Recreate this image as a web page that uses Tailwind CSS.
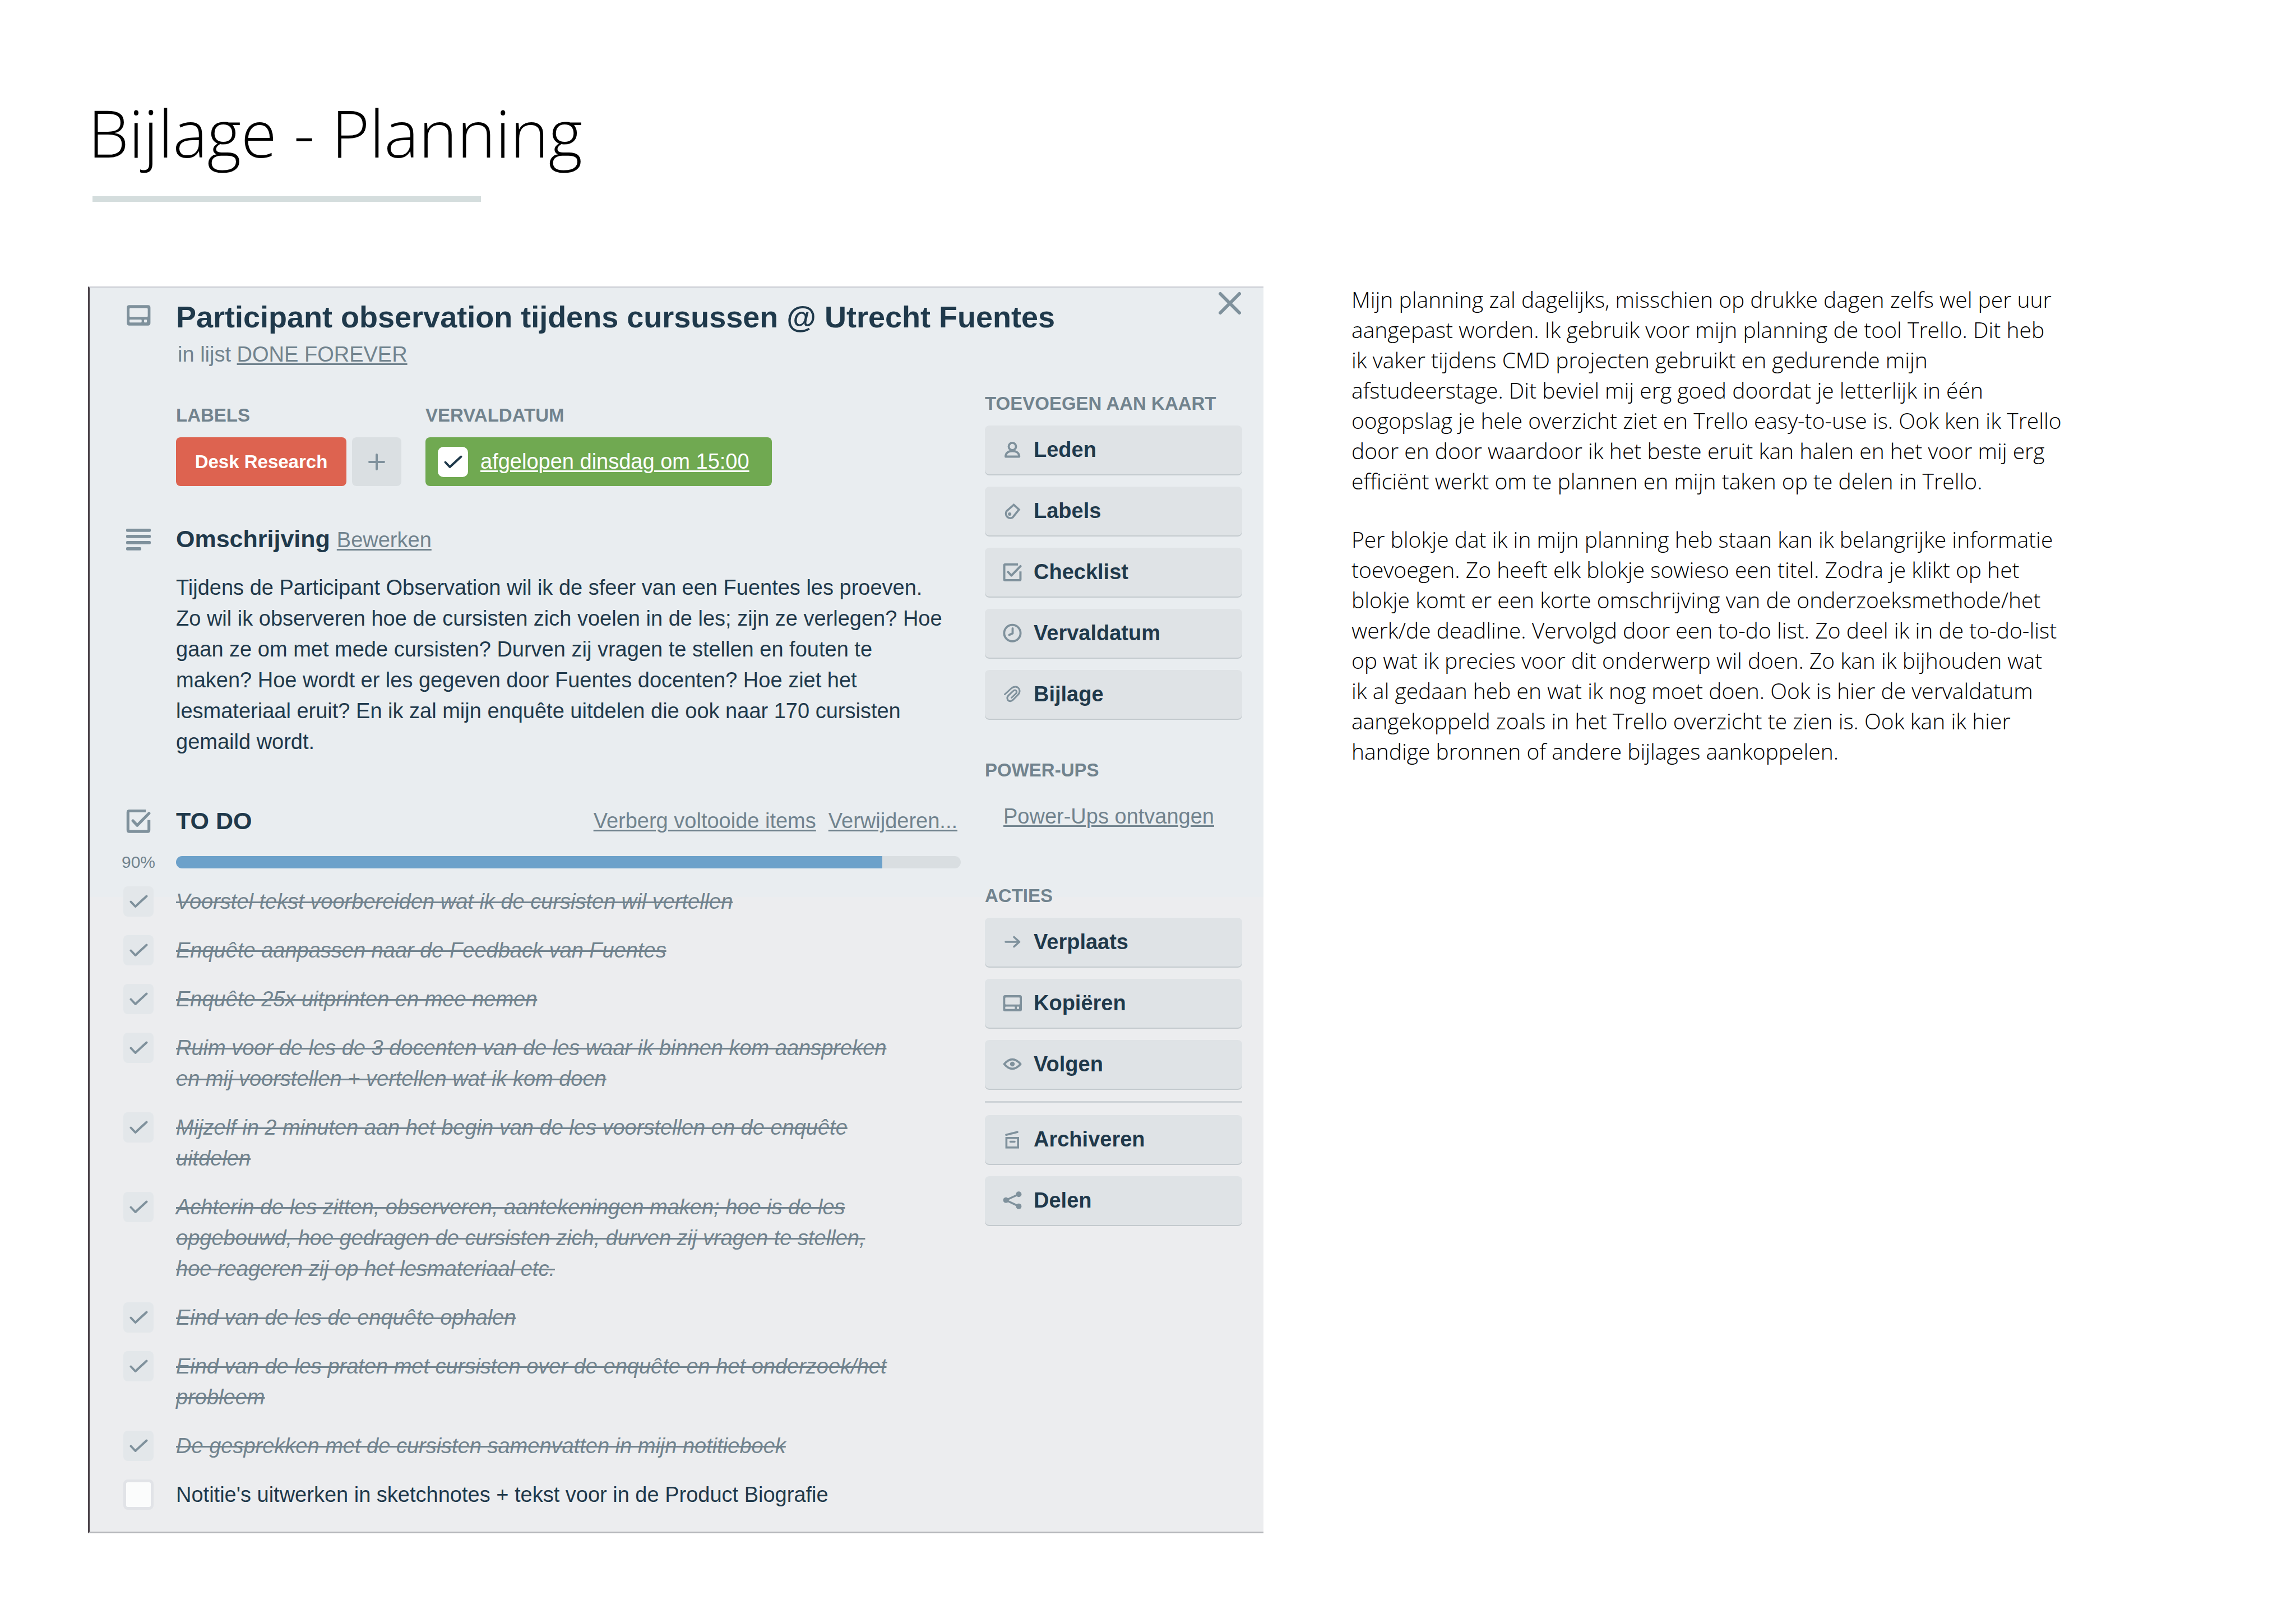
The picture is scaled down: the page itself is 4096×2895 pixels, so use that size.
<!DOCTYPE html>
<html lang="nl">
<head>
<meta charset="utf-8">
<meta name="viewport" content="width=device-width, initial-scale=1">
<title>Bijlage - Planning</title>
<script src="https://cdn.jsdelivr.net/npm/@tailwindcss/browser@4"></script>
</head>
<body class="min-h-screen bg-white px-[157px] pt-[156px] pb-[157px] text-black">

<svg class="hidden" aria-hidden="true">
  <symbol id="card" viewBox="5 6 34 31"><path fill="currentColor" fill-rule="evenodd" d="M9 7H35.5Q39 7 39 10.500V32.500Q39 36 35.500 36H9Q5.500 36 5.500 32.500V10.500Q5.500 7 9 7ZM10.500 11.200Q9.300 11.200 9.300 12.500V22.500Q9.300 23.700 10.500 23.700H34Q35.200 23.700 35.200 22.500V12.500Q35.200 11.200 34 11.200ZM10.300 27.500Q9.300 27.500 9.300 28.500V30.700Q9.300 31.700 10.300 31.700H25.500Q26.500 31.700 26.500 30.700V28.500Q26.500 27.500 25.500 27.500ZM31 27.500Q30 27.500 30 28.500V30.700Q30 31.700 31 31.700H33Q34 31.700 34 30.700V28.500Q34 27.500 33 27.500Z"/></symbol>
  <symbol id="checklist" viewBox="5 4 34.500 34.500"><g fill="none" stroke="currentColor" stroke-width="4"><path d="M32.500 6.700H9.500Q7.600 6.700 7.600 8.600V33.600Q7.600 35.500 9.500 35.500H35Q36.900 35.500 36.900 33.600V19.500"/><path stroke-linecap="round" stroke-linejoin="round" d="M14.500 20.500L20.500 27L37 10"/></g></symbol>
  <symbol id="check" viewBox="0 0 54 54"><path fill="none" stroke="currentColor" stroke-width="4" stroke-linecap="round" stroke-linejoin="round" d="M13.500 27.500L21.500 36L41.500 17.500"/></symbol>
</svg>

<header>
  <h1 class="font-['Open_Sans',sans-serif] text-[116px] leading-[160px] font-light">Bijlage - Planning</h1>
  <div class="mt-[34px] ml-2 h-[10px] w-[693px] bg-[#d4dddd]"></div>
</header>

<main class="mt-[151px] grid grid-cols-[2097fr_1528fr] items-start gap-[157px]">

  <article class="border-t-2 border-b-3 border-l-3 border-t-[#c9cbd2] border-b-[#b5b7bb] border-l-[#4a4349] bg-[linear-gradient(to_bottom,#e9edf0_49%,#ecedef_49%)] pt-[6px] pr-[38px] pb-[38px] pl-[56px] font-['Liberation_Sans',Arial,sans-serif] text-[38px] leading-[55px] text-[#1f394b]">

    <header class="flex items-start gap-9">
      <div class="mt-[14px] flex h-[58px] w-[62px] shrink-0 items-center justify-center text-[#7f919c]">
        <svg class="h-[39px] w-[44px]"><use href="#card"/></svg>
      </div>
      <div class="mt-[14px] flex-1">
        <h2 class="text-[54px] leading-[64px] font-bold">Participant observation tijdens cursussen @ Utrecht Fuentes</h2>
        <p class="mt-2 pl-[3px] text-[#71838e]">in lijst <a href="#" class="underline decoration-[3px] underline-offset-[3px]">DONE FOREVER</a></p>
      </div>
      <button type="button" aria-label="Sluiten" class="size-[44px] shrink-0 text-[#7f919c]">
        <svg class="size-[44px]" viewBox="0 0 44 44"><path fill="none" stroke="currentColor" stroke-width="6" stroke-linecap="round" d="M5 5L39 39M39 5L5 39"/></svg>
      </button>
    </header>

    <div class="mt-10 flex items-start gap-[43px]">

      <div class="min-w-0 flex-1 pt-[21px]">
        <div class="flex gap-[43px] pl-[98px]">
          <section>
            <h3 class="text-[33px] leading-10 font-bold text-[#71838e]">LABELS</h3>
            <div class="mt-[19px] flex gap-[10px]">
              <button type="button" class="h-[87px] w-[304px] rounded-[8px] bg-[#dd6350] text-[33px] leading-10 font-bold text-white">Desk Research</button>
              <button type="button" aria-label="Label toevoegen" class="flex h-[87px] w-[88px] items-center justify-center rounded-[8px] bg-[#dadfe2] text-[#7f919c]">
                <svg class="size-[32px]" viewBox="0 0 32 32"><path fill="none" stroke="currentColor" stroke-width="4" stroke-linecap="round" d="M16 3V29M3 16H29"/></svg>
              </button>
            </div>
          </section>
          <section>
            <h3 class="text-[33px] leading-10 font-bold text-[#71838e]">VERVALDATUM</h3>
            <div class="mt-[19px] flex h-[87px] w-[618px] items-center gap-[22px] rounded-[8px] bg-[#70a951] pl-[22px]">
              <span class="grid">
                <input type="checkbox" checked aria-label="Vervaldatum voltooid" class="size-[54px] appearance-none rounded-[10px] bg-white [grid-area:1/1]">
                <svg class="pointer-events-none size-[54px] [grid-area:1/1]"><use href="#check"/></svg>
              </span>
              <a href="#" class="text-white underline decoration-[3px] underline-offset-[3px]">afgelopen dinsdag om 15:00</a>
            </div>
          </section>
        </div>

        <section class="mt-[67px]">
          <div class="flex gap-9">
            <div class="flex w-[62px] shrink-0 items-center justify-center text-[#7f919c]">
              <svg class="h-[39px] w-[44px]" viewBox="0 0 44 39" fill="currentColor"><rect width="44" height="5.800" rx="2"/><rect y="11" width="44" height="5.800" rx="2"/><rect y="22" width="44" height="5.800" rx="2"/><rect y="33" width="27" height="5.800" rx="2"/></svg>
            </div>
            <div class="flex items-baseline gap-3">
              <h3 class="text-[43px] leading-[55px] font-bold">Omschrijving</h3>
              <a href="#" class="text-[#71838e] underline decoration-[3px] underline-offset-[3px]">Bewerken</a>
            </div>
          </div>
          <p class="mt-[30px] pl-[98px]">Tijdens de Participant Observation wil ik de sfeer van een Fuentes les proeven.<br>Zo wil ik observeren hoe de cursisten zich voelen in de les; zijn ze verlegen? Hoe<br>gaan ze om met mede cursisten? Durven zij vragen te stellen en fouten te<br>maken? Hoe wordt er les gegeven door Fuentes docenten? Hoe ziet het<br>lesmateriaal eruit? En ik zal mijn enquête uitdelen die ook naar 170 cursisten<br>gemaild wordt.</p>
        </section>

        <section class="mt-[86px]">
          <div class="flex gap-9">
            <div class="flex w-[62px] shrink-0 items-center justify-center text-[#7f919c]">
              <svg class="size-[44px]"><use href="#checklist"/></svg>
            </div>
            <h3 class="flex-1 text-[43px] leading-[55px] font-bold">TO DO</h3>
            <div class="flex gap-[22px] pr-[6px] text-[#71838e]">
              <a href="#" class="underline decoration-[3px] underline-offset-[3px]">Verberg voltooide items</a>
              <a href="#" class="underline decoration-[3px] underline-offset-[3px]">Verwijderen...</a>
            </div>
          </div>

          <div class="mt-[26px] flex items-center gap-9">
            <span class="w-[62px] shrink-0 text-center text-[30px] leading-10 text-[#71838e]">90%</span>
            <div class="h-[22px] flex-1 overflow-hidden rounded-full bg-[#d9dee1]" role="progressbar" aria-valuenow="90" aria-valuemin="0" aria-valuemax="100" aria-label="TO DO">
              <div class="h-full bg-[#6ca1ca]" style="width:90%"></div>
            </div>
          </div>

          <ul class="mt-[23px] flex flex-col gap-8 text-[#71838e] italic">
            <li><label class="flex gap-10 pl-1"><span class="grid h-[55px]"><input type="checkbox" checked class="size-[54px] appearance-none rounded-[8px] bg-[#e3e7ea] [grid-area:1/1]"><svg class="pointer-events-none size-[54px] text-[#7f919c] [grid-area:1/1]"><use href="#check"/></svg></span><span class="line-through decoration-[3px]">Voorstel tekst voorbereiden wat ik de cursisten wil vertellen</span></label></li>
            <li><label class="flex gap-10 pl-1"><span class="grid h-[55px]"><input type="checkbox" checked class="size-[54px] appearance-none rounded-[8px] bg-[#e3e7ea] [grid-area:1/1]"><svg class="pointer-events-none size-[54px] text-[#7f919c] [grid-area:1/1]"><use href="#check"/></svg></span><span class="line-through decoration-[3px]">Enquête aanpassen naar de Feedback van Fuentes</span></label></li>
            <li><label class="flex gap-10 pl-1"><span class="grid h-[55px]"><input type="checkbox" checked class="size-[54px] appearance-none rounded-[8px] bg-[#e3e7ea] [grid-area:1/1]"><svg class="pointer-events-none size-[54px] text-[#7f919c] [grid-area:1/1]"><use href="#check"/></svg></span><span class="line-through decoration-[3px]">Enquête 25x uitprinten en mee nemen</span></label></li>
            <li><label class="flex gap-10 pl-1"><span class="grid h-[55px]"><input type="checkbox" checked class="size-[54px] appearance-none rounded-[8px] bg-[#e3e7ea] [grid-area:1/1]"><svg class="pointer-events-none size-[54px] text-[#7f919c] [grid-area:1/1]"><use href="#check"/></svg></span><span class="line-through decoration-[3px]">Ruim voor de les de 3 docenten van de les waar ik binnen kom aanspreken<br>en mij voorstellen + vertellen wat ik kom doen</span></label></li>
            <li><label class="flex gap-10 pl-1"><span class="grid h-[55px]"><input type="checkbox" checked class="size-[54px] appearance-none rounded-[8px] bg-[#e3e7ea] [grid-area:1/1]"><svg class="pointer-events-none size-[54px] text-[#7f919c] [grid-area:1/1]"><use href="#check"/></svg></span><span class="line-through decoration-[3px]">Mijzelf in 2 minuten aan het begin van de les voorstellen en de enquête<br>uitdelen</span></label></li>
            <li><label class="flex gap-10 pl-1"><span class="grid h-[55px]"><input type="checkbox" checked class="size-[54px] appearance-none rounded-[8px] bg-[#e3e7ea] [grid-area:1/1]"><svg class="pointer-events-none size-[54px] text-[#7f919c] [grid-area:1/1]"><use href="#check"/></svg></span><span class="line-through decoration-[3px]">Achterin de les zitten, observeren, aantekeningen maken; hoe is de les<br>opgebouwd, hoe gedragen de cursisten zich, durven zij vragen te stellen,<br>hoe reageren zij op het lesmateriaal etc.</span></label></li>
            <li><label class="flex gap-10 pl-1"><span class="grid h-[55px]"><input type="checkbox" checked class="size-[54px] appearance-none rounded-[8px] bg-[#e3e7ea] [grid-area:1/1]"><svg class="pointer-events-none size-[54px] text-[#7f919c] [grid-area:1/1]"><use href="#check"/></svg></span><span class="line-through decoration-[3px]">Eind van de les de enquête ophalen</span></label></li>
            <li><label class="flex gap-10 pl-1"><span class="grid h-[55px]"><input type="checkbox" checked class="size-[54px] appearance-none rounded-[8px] bg-[#e3e7ea] [grid-area:1/1]"><svg class="pointer-events-none size-[54px] text-[#7f919c] [grid-area:1/1]"><use href="#check"/></svg></span><span class="line-through decoration-[3px]">Eind van de les praten met cursisten over de enquête en het onderzoek/het<br>probleem</span></label></li>
            <li><label class="flex gap-10 pl-1"><span class="grid h-[55px]"><input type="checkbox" checked class="size-[54px] appearance-none rounded-[8px] bg-[#e3e7ea] [grid-area:1/1]"><svg class="pointer-events-none size-[54px] text-[#7f919c] [grid-area:1/1]"><use href="#check"/></svg></span><span class="line-through decoration-[3px]">De gesprekken met de cursisten samenvatten in mijn notitieboek</span></label></li>
            <li><label class="flex gap-10 pl-1 text-[#1f394b] not-italic"><input type="checkbox" class="size-[54px] appearance-none rounded-[8px] border-5 border-[#e1e3e7] bg-[#fbfcfc]"><span>Notitie's uitwerken in sketchnotes + tekst voor in de Product Biografie</span></label></li>
          </ul>
        </section>
      </div>

      <aside class="w-[459px] shrink-0">
        <h3 class="text-[33px] leading-10 font-bold text-[#71838e]">TOEVOEGEN AAN KAART</h3>
        <div class="mt-[19px] flex flex-col gap-[22px]">
          <button type="button" class="flex h-[87px] items-center gap-4 rounded-[8px] bg-[#dfe3e6] pl-[27px] font-bold shadow-[0_2px_0_#c3cace]"><svg class="size-[44px] text-[#7f919c]" viewBox="0 0 44 44" fill="none" stroke="currentColor" stroke-width="3.800"><circle cx="22" cy="15.400" r="6.500"/><path stroke-linejoin="round" d="M10 33.500C10 27 15 23.500 22 23.500S34.300 27 34.300 33.500Z"/></svg>Leden</button>
          <button type="button" class="flex h-[87px] items-center gap-4 rounded-[8px] bg-[#dfe3e6] pl-[27px] font-bold shadow-[0_2px_0_#c3cace]"><svg class="size-[44px] text-[#7f919c]" viewBox="0 0 44 44" fill="none" stroke="currentColor" stroke-width="3.600"><path d="M24.600 10.400L12 21.400A8 8 0 0 0 22.500 33L33.900 19Z"/><circle cx="17.200" cy="27" r="3" fill="currentColor" stroke="none"/></svg>Labels</button>
          <button type="button" class="flex h-[87px] items-center gap-[21px] rounded-[8px] bg-[#dfe3e6] pl-8 font-bold shadow-[0_2px_0_#c3cace]"><svg class="size-[34px] text-[#7f919c]"><use href="#checklist"/></svg>Checklist</button>
          <button type="button" class="flex h-[87px] items-center gap-4 rounded-[8px] bg-[#dfe3e6] pl-[27px] font-bold shadow-[0_2px_0_#c3cace]"><svg class="size-[44px] text-[#7f919c]" viewBox="0 0 44 44" fill="none" stroke="currentColor" stroke-width="3.800"><circle cx="22" cy="21.300" r="14.600"/><path stroke-linecap="round" stroke-linejoin="round" d="M22.500 13V21.800L16.500 24.500"/></svg>Vervaldatum</button>
          <button type="button" class="flex h-[87px] items-center gap-4 rounded-[8px] bg-[#dfe3e6] pl-[27px] font-bold shadow-[0_2px_0_#c3cace]"><svg class="size-[44px] text-[#7f919c]" viewBox="0 0 44 44" fill="none" stroke="currentColor" stroke-width="3" stroke-linecap="round"><path d="M8.500 21.500L20 11C25 6.500 31 7.500 33.500 11C36 15 35 19.500 31.500 23L23.500 31C20.500 34.500 16.500 34.500 14.300 32C12 29 12.600 26 15.200 23.400L23.500 15.500C25.500 13.500 28 13.800 29 15.300C30.200 17 29.500 19 28 20.500L20.500 27.500"/></svg>Bijlage</button>
        </div>

        <h3 class="mt-[72px] text-[33px] leading-10 font-bold text-[#71838e]">POWER-UPS</h3>
        <p class="mt-[35px] pl-[33px] text-[#71838e]"><a href="#" class="underline decoration-[3px] underline-offset-[3px]">Power-Ups ontvangen</a></p>

        <h3 class="mt-[94px] text-[33px] leading-10 font-bold text-[#71838e]">ACTIES</h3>
        <div class="mt-[19px] flex flex-col gap-[22px]">
          <button type="button" class="flex h-[87px] items-center gap-4 rounded-[8px] bg-[#dfe3e6] pl-[27px] font-bold shadow-[0_2px_0_#c3cace]"><svg class="size-[44px] text-[#7f919c]" viewBox="0 0 44 44" fill="none" stroke="currentColor" stroke-width="3.600" stroke-linecap="round" stroke-linejoin="round"><path d="M10 21H34M25 12.500L34.500 21L25 29.500"/></svg>Verplaats</button>
          <button type="button" class="flex h-[87px] items-center gap-[21px] rounded-[8px] bg-[#dfe3e6] pl-8 font-bold shadow-[0_2px_0_#c3cace]"><svg class="h-[31px] w-[34px] text-[#7f919c]"><use href="#card"/></svg>Kopiëren</button>
          <button type="button" class="flex h-[87px] items-center gap-4 rounded-[8px] bg-[#dfe3e6] pl-[27px] font-bold shadow-[0_2px_0_#c3cace]"><svg class="size-[44px] text-[#7f919c]" viewBox="0 0 44 44" fill="none" stroke="currentColor" stroke-width="3.600" stroke-linejoin="round"><path d="M7.500 21C13 14.500 18 12.600 22 12.600S31 14.500 36.700 21C31 27.500 26 29.400 22 29.400S13 27.500 7.500 21Z"/><circle cx="22" cy="21" r="4.200" fill="currentColor" stroke="none"/></svg>Volgen</button>
          <hr class="h-[3px] border-0 bg-[#ced3d7]">
          <button type="button" class="flex h-[87px] items-center gap-4 rounded-[8px] bg-[#dfe3e6] pl-[27px] font-bold shadow-[0_2px_0_#c3cace]"><svg class="size-[44px] text-[#7f919c]" viewBox="0 0 44 44" fill="none" stroke="currentColor" stroke-width="3.600" stroke-linecap="round"><path d="M11 13.300L31 8.300M18.500 25.500H26"/><rect x="11.400" y="18.800" width="20.800" height="17"/></svg>Archiveren</button>
          <button type="button" class="flex h-[87px] items-center gap-4 rounded-[8px] bg-[#dfe3e6] pl-[27px] font-bold shadow-[0_2px_0_#c3cace]"><svg class="size-[44px] text-[#7f919c]" viewBox="0 0 44 44"><path fill="none" stroke="currentColor" stroke-width="3.400" d="M33.400 10.200L10.600 20.800L33.400 31.600"/><g fill="currentColor"><circle cx="10.600" cy="20.800" r="5"/><circle cx="33.400" cy="10.200" r="5"/><circle cx="33.400" cy="31.800" r="5"/></g></svg>Delen</button>
        </div>
      </aside>
    </div>
  </article>

  <section class="-mt-[4px] flex flex-col gap-[50px] font-['Open_Sans',sans-serif] text-[39px] leading-[54px] font-light">
    <p>Mijn planning zal dagelijks, misschien op drukke dagen zelfs wel per uur<br>aangepast worden. Ik gebruik voor mijn planning de tool Trello. Dit heb<br>ik vaker tijdens CMD projecten gebruikt en gedurende mijn<br>afstudeerstage. Dit beviel mij erg goed doordat je letterlijk in één<br>oogopslag je hele overzicht ziet en Trello easy-to-use is. Ook ken ik Trello<br>door en door waardoor ik het beste eruit kan halen en het voor mij erg<br>efficiënt werkt om te plannen en mijn taken op te delen in Trello.</p>
    <p>Per blokje dat ik in mijn planning heb staan kan ik belangrijke informatie<br>toevoegen. Zo heeft elk blokje sowieso een titel. Zodra je klikt op het<br>blokje komt er een korte omschrijving van de onderzoeksmethode/het<br>werk/de deadline. Vervolgd door een to-do list. Zo deel ik in de to-do-list<br>op wat ik precies voor dit onderwerp wil doen. Zo kan ik bijhouden wat<br>ik al gedaan heb en wat ik nog moet doen. Ook is hier de vervaldatum<br>aangekoppeld zoals in het Trello overzicht te zien is. Ook kan ik hier<br>handige bronnen of andere bijlages aankoppelen.</p>
  </section>
</main>
</body>
</html>
